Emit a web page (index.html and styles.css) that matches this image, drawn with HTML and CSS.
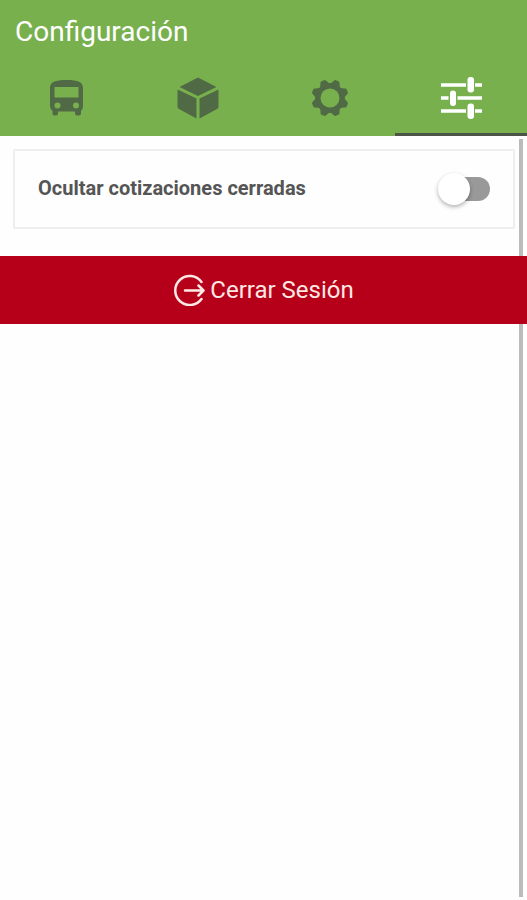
FILE: index.html
```html
<!DOCTYPE html>
<html lang="es">
<head>
<meta charset="utf-8">
<meta name="viewport" content="width=device-width, initial-scale=1">
<title>Configuración</title>
<link rel="stylesheet" href="styles.css">
</head>
<body>
<header class="app-bar">
  <h1 class="title">Configuración</h1>
  <nav class="tabs">
    <a class="tab" href="#transporte" aria-label="Transporte">
      <svg class="icon" viewBox="0 0 42 42" aria-hidden="true">
        <path fill="currentColor" fill-rule="evenodd" d="M5 11C5 5 10 3 21.500 3S38 5 38 11V29Q38 32 36 34V36.500Q36 38.500 34 38.500H32Q30 38.500 30 36.500V34.500H13V36.500Q13 38.500 11 38.500H9.500Q7.500 38.500 7.500 36.500V34Q5 32 5 29ZM9.500 10V20.500H33.500V10ZM12.500 25.500a3 3 0 1 0 0 6a3 3 0 1 0 0-6ZM31 25.500a3 3 0 1 0 0 6a3 3 0 1 0 0-6Z"/>
      </svg>
    </a>
    <a class="tab" href="#productos" aria-label="Productos">
      <svg class="icon" viewBox="0 0 42 42" aria-hidden="true">
        <path fill="currentColor" d="M21 .5L39.500 10L21 19L2.500 10ZM.5 12.500L19.500 21.500V41.500L2 32Q.5 31 .5 29.500ZM41.500 12.500L22.500 21.500V41.500L40 32Q41.500 31 41.500 29.500Z"/>
      </svg>
    </a>
    <a class="tab" href="#sistema" aria-label="Sistema">
      <svg class="icon" viewBox="-22 -21 42 42" aria-hidden="true">
        <defs><path id="teeth" fill="currentColor" d="M-7.500-12Q-4-14-3-17.500Q-2.700-18.700-1.500-18.700H1.500Q2.700-18.700 3-17.500Q4-14 7.500-12L7.500 12Q4 14 3 17.500Q2.700 18.700 1.500 18.700H-1.500Q-2.700 18.700-3 17.500Q-4 14-7.500 12Z"/>
        <mask id="hole"><rect x="-22" y="-21" width="42" height="42" fill="#fff"/><circle r="9.500" fill="#000"/></mask></defs>
        <g mask="url(#hole)">
          <use href="#teeth" transform="rotate(22.500)"/>
          <use href="#teeth" transform="rotate(67.500)"/>
          <use href="#teeth" transform="rotate(112.500)"/>
          <use href="#teeth" transform="rotate(157.500)"/>
        </g>
      </svg>
    </a>
    <a class="tab tab-active" href="#ajustes" aria-label="Ajustes" aria-current="page">
      <svg class="icon" viewBox="-1 0 42 42" aria-hidden="true">
        <path fill="none" stroke="currentColor" stroke-width="3.500" d="M0 8H25M34 8H41M0 21H7.500M16.500 21H41M0 34H25M34 34H41"/>
        <g fill="currentColor">
          <rect x="26.500" y="0" width="6.500" height="15.500" rx="3"/>
          <rect x="9" y="13.500" width="6" height="15.500" rx="3"/>
          <rect x="26.500" y="26.500" width="6.500" height="15.500" rx="3"/>
        </g>
      </svg>
    </a>
  </nav>
</header>
<main class="content">
  <div class="scroll-thumb"></div>
  <div class="card">
    <label class="card-label" for="hide-closed">Ocultar cotizaciones cerradas</label>
    <input class="switch" id="hide-closed" type="checkbox" role="switch">
  </div>
  <button class="logout" type="button">
    <svg class="logout-icon" viewBox="0 0 32 32" aria-hidden="true">
      <path fill="none" stroke="currentColor" stroke-width="2.500" stroke-linecap="round" stroke-linejoin="round" d="M28.500 8A14.500 14.500 0 1 0 28.500 25M12 16.500H30M25.500 11.500L30.500 16.500L25.500 21.500"/>
    </svg>
    <span>Cerrar Sesión</span>
  </button>
</main>
</body>
</html>
```
FILE: styles.css
```css
* {
  box-sizing: border-box;
}

body {
  display: flex;
  flex-direction: column;
  min-height: 100vh;
  margin: 0;
  background: #fefefe;
  color: #555;
  font-family: Roboto, sans-serif;
}

.app-bar {
  background: #78b04d;
}

.title {
  margin: 0;
  padding: 16px 15px 12px;
  color: #fff;
  font-size: 28px;
  font-weight: 400;
  line-height: 32px;
}

.tabs {
  display: grid;
  grid-template-columns: repeat(4, 1fr);
}

.tab {
  display: flex;
  justify-content: center;
  padding: 17px 0 14px;
  border-bottom: 3px solid transparent;
  color: #4f6a44;
}

.tab-active {
  border-bottom-color: #4b5447;
  color: #fff;
}

.icon {
  width: 42px;
  height: 42px;
}

.content {
  position: relative;
  flex: 1;
}

.card {
  display: flex;
  align-items: center;
  justify-content: space-between;
  height: 80px;
  margin: 13px 12px 27px 13px;
  padding: 0 23px;
  border: 2px solid #eee;
  border-radius: 2px;
}

.card-label {
  padding-bottom: 2px;
  font-size: 20px;
  font-weight: 700;
  line-height: 24px;
}

.switch {
  display: flex;
  align-items: center;
  width: 48px;
  height: 24px;
  margin: 0;
  border-radius: 12px;
  background: #999;
  appearance: none;
}

.switch::before {
  width: 32px;
  height: 32px;
  margin-left: -4px;
  border-radius: 50%;
  background: #fff;
  box-shadow: 0 2px 4px rgba(0, 0, 0, 0.3);
  content: "";
}

.switch:checked {
  justify-content: flex-end;
  background: #78b04d;
}

.logout {
  position: relative;
  display: flex;
  align-items: center;
  justify-content: center;
  gap: 5px;
  width: 100%;
  height: 68px;
  padding: 0;
  border: 0;
  background: #b60019;
  color: #ffe9e4;
  font-family: inherit;
  font-size: 24px;
  line-height: 28px;
}

.logout-icon {
  width: 32px;
  height: 32px;
}

.scroll-thumb {
  position: absolute;
  top: 3px;
  right: 4px;
  bottom: 3px;
  width: 4px;
  background: #bbb;
}
```
